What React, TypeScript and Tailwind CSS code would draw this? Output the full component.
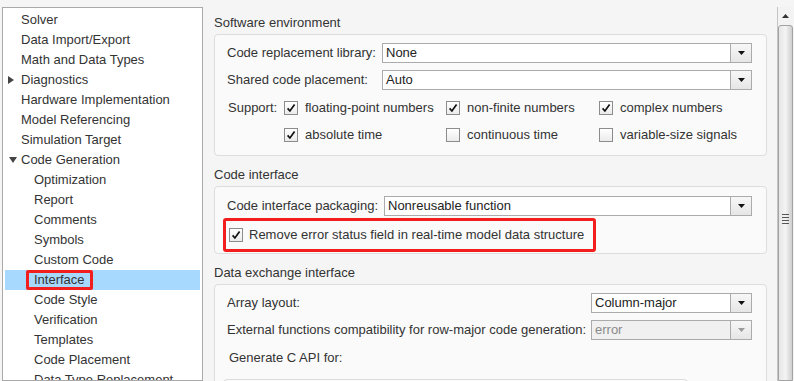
import React from 'react'

type TreeItem = { label: string; level: 0 | 1; arrow?: 'right' | 'down'; selected?: boolean }

const tree: TreeItem[] = [
  { label: 'Solver', level: 0 },
  { label: 'Data Import/Export', level: 0 },
  { label: 'Math and Data Types', level: 0 },
  { label: 'Diagnostics', level: 0, arrow: 'right' },
  { label: 'Hardware Implementation', level: 0 },
  { label: 'Model Referencing', level: 0 },
  { label: 'Simulation Target', level: 0 },
  { label: 'Code Generation', level: 0, arrow: 'down' },
  { label: 'Optimization', level: 1 },
  { label: 'Report', level: 1 },
  { label: 'Comments', level: 1 },
  { label: 'Symbols', level: 1 },
  { label: 'Custom Code', level: 1 },
  { label: 'Interface', level: 1, selected: true },
  { label: 'Code Style', level: 1 },
  { label: 'Verification', level: 1 },
  { label: 'Templates', level: 1 },
  { label: 'Code Placement', level: 1 },
  { label: 'Data Type Replacement', level: 1 },
]

function Check({ checked }: { checked?: boolean }) {
  return (
    <span className="flex h-[14px] w-[14px] shrink-0 items-center justify-center border border-[#8c8c8c] bg-gradient-to-b from-[#ffffff] to-[#ebebeb]">
      {checked && (
        <svg width="10" height="10" viewBox="0 0 10 10">
          <path d="M1.6 5.4 L3.9 8 L8.6 1.4" stroke="#111" strokeWidth="1.7" fill="none" />
        </svg>
      )}
    </span>
  )
}

function Select({ value, disabled, className = '' }: { value: string; disabled?: boolean; className?: string }) {
  return (
    <div
      className={`flex h-[20px] border border-[#ababab] ${disabled ? 'bg-[#f0f0f0] text-[#8a8a8a]' : 'bg-white text-[#222]'} ${className}`}
    >
      <div className="flex-1 truncate pl-[3px] leading-[18px]">{value}</div>
      <div className="flex w-[21px] items-center justify-center border-l border-[#ababab] bg-gradient-to-b from-[#f7f7f7] to-[#e6e6e6]">
        <svg width="7" height="4" viewBox="0 0 7 4">
          <path d="M0 0h7L3.5 4z" fill={disabled ? '#9a9a9a' : '#111'} />
        </svg>
      </div>
    </div>
  )
}

function Section({ title, className = '', children }: { title: string; className?: string; children: React.ReactNode }) {
  return (
    <div>
      <div className="h-[16px] leading-[16px]">{title}</div>
      <div className={`mt-[3px] rounded-[4px] border border-[#dddddd] bg-[#fafafa] ${className}`}>{children}</div>
    </div>
  )
}

export default function App() {
  return (
    <div className="flex h-[381px] w-[794px] overflow-hidden bg-[#f5f5f5] font-['Liberation_Sans',Arial,sans-serif] text-[13px] text-[#333]">
      {/* tree */}
      <div className="ml-[2px] mt-[7px] w-[201px] shrink-0 overflow-hidden border border-[#a9a9a9] bg-white pt-[2px]">
        {tree.map((t) => (
          <div
            key={t.label}
            className={`mx-[2px] flex h-[20px] items-center whitespace-nowrap leading-[20px] ${t.selected ? 'bg-[#a7d8fd]' : ''} ${
              t.level === 0 ? '' : t.selected ? 'pl-[21px]' : 'pl-[29px]'
            }`}
          >
            {t.level === 0 && (
              <span className="flex w-[16px] shrink-0 items-center pl-[3px]">
                {t.arrow === 'right' && (
                  <svg width="6" height="8" viewBox="0 0 6 8">
                    <path d="M0 0L6 4L0 8z" fill="#444" />
                  </svg>
                )}
                {t.arrow === 'down' && (
                  <svg width="8" height="6" viewBox="0 0 8 6" className="ml-[1px]">
                    <path d="M0 0H8L4 6z" fill="#444" />
                  </svg>
                )}
              </span>
            )}
            {t.selected ? (
              <span className="h-[20px] rounded-[2px] border-[3px] border-[#f21d1d] px-[5px] leading-[14px]">{t.label}</span>
            ) : (
              <span>{t.label}</span>
            )}
          </div>
        ))}
      </div>

      {/* settings */}
      <div className="flex min-w-0 flex-1 flex-col gap-[11px] pl-[11px] pr-[10px] pt-[15px]">
        <Section title="Software environment" className="flex flex-col gap-[7px] pb-[10px] pl-[12px] pr-[14px] pt-[8px]">
          <div className="flex h-[20px] items-center">
            <span className="w-[155px] shrink-0">Code replacement library:</span>
            <Select value="None" className="flex-1" />
          </div>
          <div className="flex h-[20px] items-center">
            <span className="w-[155px] shrink-0">Shared code placement:</span>
            <Select value="Auto" className="flex-1" />
          </div>
          <div className="mt-[1px] flex h-[20px] items-center">
            <span className="w-[57px] shrink-0 pl-[1px]">Support:</span>
            <span className="flex w-[162px] items-center gap-[7px]">
              <Check checked /> floating-point numbers
            </span>
            <span className="flex w-[153px] items-center gap-[7px]">
              <Check checked /> non-finite numbers
            </span>
            <span className="flex items-center gap-[7px]">
              <Check checked /> complex numbers
            </span>
          </div>
          <div className="flex h-[20px] items-center">
            <span className="w-[57px] shrink-0" />
            <span className="flex w-[162px] items-center gap-[7px]">
              <Check checked /> absolute time
            </span>
            <span className="flex w-[153px] items-center gap-[7px]">
              <Check /> continuous time
            </span>
            <span className="flex items-center gap-[7px]">
              <Check /> variable-size signals
            </span>
          </div>
        </Section>

        <Section title="Code interface" className="pb-[1px] pl-[12px] pr-[14px] pt-[9px]">
          <div className="flex h-[20px] items-center">
            <span className="w-[157px] shrink-0">Code interface packaging:</span>
            <Select value="Nonreusable function" className="flex-1" />
          </div>
          <div className="-ml-[4px] mt-[2px] flex h-[34px] w-[373px] items-center gap-[6px] rounded-[3px] border-[3px] border-[#f21d1d] pl-[3px]">
            <Check checked />
            <span className="whitespace-nowrap">Remove error status field in real-time model data structure</span>
          </div>
        </Section>

        <Section title="Data exchange interface" className="pl-[12px] pr-[14px] pt-[8px]">
          <div className="flex h-[20px] items-center">
            <span className="flex-1">Array layout:</span>
            <Select value="Column-major" className="w-[161px]" />
          </div>
          <div className="mt-[7px] flex h-[20px] items-center">
            <span className="flex-1 whitespace-nowrap">External functions compatibility for row-major code generation:</span>
            <Select value="error" disabled className="w-[161px]" />
          </div>
          <div className="mt-[8px] h-[20px] pl-[2px] leading-[20px]">Generate C API for:</div>
          <div className="-ml-[4px] mt-[11px] flex h-[30px] w-[465px] rounded-[4px] border border-[#dddddd] bg-[#fafafa]">
            <span className="ml-[16px] mt-[1px]"><Check /></span>
            <span className="ml-[91px] mt-[1px]"><Check /></span>
            <span className="ml-[130px] mt-[1px]"><Check /></span>
            <span className="ml-[82px] mt-[1px]"><Check /></span>
          </div>
        </Section>
      </div>

      {/* scrollbar */}
      <div className="mr-[1px] mt-[7px] flex w-[16px] shrink-0 flex-col border-l border-[#c4c4c4] bg-[#f3f3f3]">
        <div className="flex h-[18px] items-center justify-center">
          <svg width="7" height="4" viewBox="0 0 7 4">
            <path d="M0 4h7L3.5 0z" fill="#333" />
          </svg>
        </div>
        <div className="flex flex-1 flex-col items-center rounded-t-[3px] border border-[#a3a3a3] bg-gradient-to-r from-[#e6e6e6] via-[#f4f4f4] to-[#cfcfcf] pt-[188px]">
          <div className="flex flex-col gap-[2px]">
            <span className="h-[1px] w-[7px] bg-[#555]" />
            <span className="h-[1px] w-[7px] bg-[#555]" />
            <span className="h-[1px] w-[7px] bg-[#555]" />
            <span className="h-[1px] w-[7px] bg-[#555]" />
          </div>
        </div>
      </div>
    </div>
  )
}
